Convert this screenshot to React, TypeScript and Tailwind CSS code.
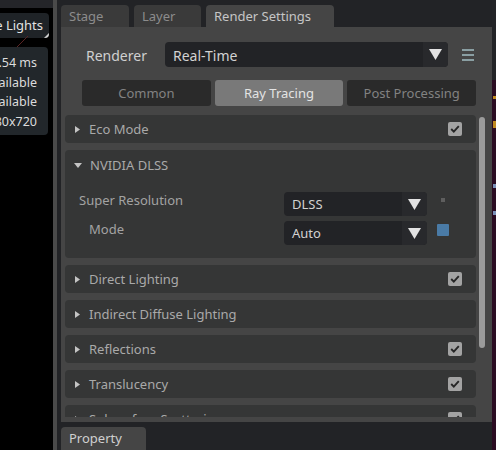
import React from "react";

const font = { fontFamily: '"Noto Sans", "Open Sans", sans-serif' };

function RightTri() {
  return (
    <svg width="5" height="7" viewBox="0 0 5 7" className="shrink-0">
      <path d="M0 0 L5 3.5 L0 7 Z" fill="#c4c4c4" />
    </svg>
  );
}

function DownTri() {
  return (
    <svg width="8" height="5" viewBox="0 0 8 5" className="shrink-0">
      <path d="M0 0 L8 0 L4 5 Z" fill="#c4c4c4" />
    </svg>
  );
}

function Check() {
  return (
    <div className="w-[14px] h-[14px] rounded-[2px] bg-[#a3a3a3] flex items-center justify-center">
      <svg width="10" height="8" viewBox="0 0 10 8">
        <path d="M1.2 4 L3.8 6.6 L8.8 1.2" stroke="#262626" strokeWidth="1.9" fill="none" />
      </svg>
    </div>
  );
}

function Dropdown({ value, className, text }: { value: string; className: string; text: string }) {
  return (
    <div className={`flex items-stretch rounded-[4px] bg-[#222326] overflow-hidden ${className}`}>
      <div className={`flex-1 flex items-center pl-[8px] pt-[2px] text-[#d2d2d2] ${text}`}>{value}</div>
      <div className="w-[25px] bg-[#28292c] flex items-center justify-center">
        <svg width="13" height="11" viewBox="0 0 13 11">
          <path d="M0 0 L13 0 L6.5 11 Z" fill="#e2e2e2" />
        </svg>
      </div>
    </div>
  );
}

function Frame({ label, checked }: { label: string; checked?: boolean }) {
  return (
    <div className="h-[28px] shrink-0 rounded-[4px] bg-[#353636] flex items-center pl-[10px] pr-[14px]">
      <RightTri />
      <span className="ml-[9px] pt-[2px] text-[13px] text-[#a9a9a9]">{label}</span>
      <div className="ml-auto">{checked && <Check />}</div>
    </div>
  );
}

export default function App() {
  return (
    <div className="w-[496px] h-[450px] flex overflow-hidden bg-black" style={font}>
      {/* viewport */}
      <div className="w-[53px] h-full bg-black relative flex flex-col">
        <div className="h-[8px] bg-[#242529]" />
        <div className="mt-[5px] h-[25px] w-[49px] rounded-r-[4px] bg-[#1f2327] flex items-center justify-end pr-[6px] pt-[1px] overflow-hidden whitespace-nowrap text-[13px] text-[#e2e2e2] relative">
          Scene Lights
          <div className="absolute right-0 bottom-0 w-0 h-0 border-l-[5px] border-l-transparent border-b-[5px] border-b-[#d0d0d0]" />
        </div>
        <svg width="53" height="14" className="absolute left-0 top-[35px]">
          <path d="M28 1 L17 12" stroke="#5a2424" strokeWidth="1" />
        </svg>
        <div className="mt-[9px] h-[88px] w-[48px] rounded-r-[4px] bg-[#22272b] flex flex-col items-end justify-center pr-[11px] pt-[2px] overflow-hidden whitespace-nowrap text-[12.5px] leading-[19.5px] text-[#dcdcdc]">
          <div>Frame: 16.54 ms</div>
          <div>Memory: not available</div>
          <div>Device: not available</div>
          <div>1280x720</div>
        </div>
      </div>
      <div className="w-[4px] h-full bg-[#4a4a4a]" />

      {/* window */}
      <div className="w-[435px] h-full bg-[#222326] pl-[4px] flex flex-col">
        {/* tabs */}
        <div className="h-[27px] shrink-0 flex items-end gap-[5px] text-[13px]">
          <div className="h-[22px] w-[68px] rounded-t-[4px] bg-[#3a3a3a] pl-[8px] pt-[1px] flex items-center text-[#8c8c8c]">Stage</div>
          <div className="h-[22px] w-[67px] rounded-t-[4px] bg-[#3a3a3a] pl-[8px] pt-[1px] flex items-center text-[#8c8c8c]">Layer</div>
          <div className="h-[22px] w-[128px] rounded-t-[4px] bg-[#454545] pl-[8px] pt-[1px] flex items-center text-[#c6c6c6]">Render Settings</div>
        </div>

        {/* panel */}
        <div className="h-[395px] shrink-0 bg-[#454545] flex flex-col pt-[15px] pb-[5px]">
          <div className="h-[25px] shrink-0 flex items-center">
            <div className="w-[104px] pl-[25px] pt-[2px] text-[14px] text-[#d0d0d0]">Renderer</div>
            <Dropdown value="Real-Time" className="w-[283px] h-[25px]" text="text-[14px]" />
            <div className="ml-[14px] flex flex-col gap-[3px]">
              <div className="w-[12px] h-[2px] bg-[#8a9fa3]" />
              <div className="w-[12px] h-[2px] bg-[#8a9fa3]" />
              <div className="w-[12px] h-[2px] bg-[#8a9fa3]" />
            </div>
          </div>

          <div className="mt-[13px] ml-[21px] w-[394px] h-[26px] shrink-0 grid grid-cols-3 gap-[4px] text-[13px]">
            <div className="rounded-[3px] bg-[#2a2a2a] text-[#828282] pt-[2px] flex items-center justify-center">Common</div>
            <div className="rounded-[3px] bg-[#797979] text-[#e4e4e4] pt-[2px] flex items-center justify-center">Ray Tracing</div>
            <div className="rounded-[3px] bg-[#2a2a2a] text-[#828282] pt-[2px] flex items-center justify-center">Post Processing</div>
          </div>

          <div className="mt-[9px] flex-1 flex overflow-hidden">
            <div className="ml-[4px] w-[411px] flex flex-col gap-[7px]">
              <Frame label="Eco Mode" checked />
              <div className="h-[108px] shrink-0 rounded-[4px] bg-[#353636] flex flex-col">
                <div className="h-[30px] flex items-center pl-[9px]">
                  <DownTri />
                  <span className="ml-[8px] pt-[2px] text-[13px] text-[#a9a9a9]">NVIDIA DLSS</span>
                </div>
                <div className="mt-[12px] flex flex-col gap-[5px] text-[13px] text-[#a3a3a3]">
                  <div className="h-[24px] flex items-center">
                    <div className="w-[219px] pl-[14px] -mt-[6px]">Super Resolution</div>
                    <Dropdown value="DLSS" className="w-[143px] h-[24px]" text="text-[13px]" />
                    <div className="ml-[10px] w-[12px] flex justify-center -mt-[8px]">
                      <div className="w-[4px] h-[4px] bg-[#5e5e5e]" />
                    </div>
                  </div>
                  <div className="h-[24px] flex items-center">
                    <div className="w-[219px] pl-[24px] -mt-[6px]">Mode</div>
                    <Dropdown value="Auto" className="w-[143px] h-[24px]" text="text-[13px]" />
                    <div className="ml-[10px] w-[12px] flex justify-center -mt-[6px]">
                      <div className="w-[12px] h-[12px] rounded-[1px] bg-[#4a7ba6]" />
                    </div>
                  </div>
                </div>
              </div>
              <Frame label="Direct Lighting" checked />
              <Frame label="Indirect Diffuse Lighting" />
              <Frame label="Reflections" checked />
              <Frame label="Translucency" checked />
              <Frame label="Subsurface Scattering" checked />
            </div>
            <div className="ml-[3px] pt-[2px]">
              <div className="w-[6px] h-[231px] rounded-[3px] bg-[#9b9b9b]" />
            </div>
          </div>
        </div>

        {/* bottom bar */}
        <div className="flex-1 flex items-end">
          <div className="h-[23px] w-[85px] rounded-t-[4px] bg-[#454545] pl-[8px] pt-[1px] flex items-center text-[13px] text-[#d0d0d0]">Property</div>
        </div>
      </div>

      {/* right strip */}
      <div className="w-[4px] h-full flex flex-col relative">
        <div className="h-[80px] bg-[#232427]" />
        <div className="flex-1 bg-[#2b0c22]" />
        <div className="absolute left-[1px] top-[96px] w-[3px] h-[3px] bg-[#c08a20]" />
        <div className="absolute left-[1px] top-[121px] w-[3px] h-[7px] bg-[#c08a20]" />
        <div className="absolute left-[1px] top-[184px] w-[3px] h-[4px] bg-[#7a90b8]" />
        <div className="absolute left-[1px] top-[211px] w-[3px] h-[4px] bg-[#7a90b8]" />
      </div>
    </div>
  );
}
